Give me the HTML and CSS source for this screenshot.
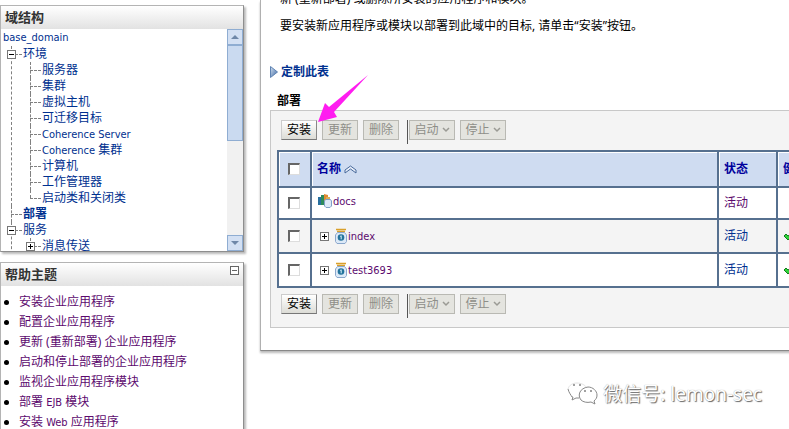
FILE: index.html
```html
<!DOCTYPE html>
<html lang="zh-CN">
<head>
<meta charset="utf-8">
<title>部署</title>
<link rel="stylesheet" href="styles.css">
</head>
<body>
<svg class="defs" aria-hidden="true">
  <defs>
    <linearGradient id="tri" x1="0" y1="0" x2="1" y2="1"><stop offset="0" stop-color="#d3e2f2"/><stop offset="1" stop-color="#3c66a0"/></linearGradient>
    <symbol id="jar" viewBox="0 0 12 16">
      <path d="M1 1.500h10M2 3.500h8" stroke="#d9a02b" stroke-width="1.4"/>
      <path d="M2.500 4.500h7l2 2.500v6.500l-1.500 2h-8l-1.500-2v-6.500z" fill="#dce9f7" stroke="#8aa7cc"/>
      <circle cx="6" cy="9.500" r="3.300" fill="#23739c"/>
      <path d="M5.200 8.500l1-.8v3.600" fill="none" stroke="#d8f2fa"/>
    </symbol>
    <symbol id="books" viewBox="0 0 14 14">
      <path d="M0 3h4v8H0z" fill="#286f9f"/><path d="M3 1h3v10H3z" fill="#2c8b5b"/>
      <path d="M6 0l4 1v9H6z" fill="#e08a32"/><path d="M8 3h4v2H8z" fill="#dcae54"/>
      <path d="M7.500 5.500h5l1 1.500v5l-1.500 1.500h-4l-1.500-1.500v-5z" fill="#dce9f7" stroke="#7fa0c8"/>
    </symbol>
    <symbol id="check" viewBox="0 0 12 9">
      <path d="M1 4l2-2 2 2 4-3 2 1-6 6z" fill="#2fd43a" stroke="#137c1c"/>
    </symbol>
    <symbol id="chev" viewBox="0 0 8 6"><path d="M1 1l3 3 3-3" fill="none" stroke="#9a9a94" stroke-width="1.500"/></symbol>
  </defs>
</svg>
<div class="page">
  <aside class="side">
    <section class="panel">
      <h2 class="panel-head">域结构</h2>
      <div class="tree-wrap">
        <nav class="tree">
          <a class="root" href="#">base_domain</a>
          <ul class="lvl1">
            <li><span class="box minus"></span><a href="#">环境</a>
              <ul class="lvl2">
                <li><a href="#">服务器</a></li>
                <li><a href="#">集群</a></li>
                <li><a href="#">虚拟主机</a></li>
                <li><a href="#">可迁移目标</a></li>
                <li><a href="#"><span class="latin">Coherence Server</span></a></li>
                <li><a href="#"><span class="latin">Coherence</span> 集群</a></li>
                <li><a href="#">计算机</a></li>
                <li><a href="#">工作管理器</a></li>
                <li><a href="#">启动类和关闭类</a></li>
              </ul>
            </li>
            <li><a class="current" href="#">部署</a></li>
            <li class="more"><span class="box minus"></span><a href="#">服务</a>
              <ul class="lvl2">
                <li class="more"><span class="box plus"></span><a href="#">消息传送</a></li>
              </ul>
            </li>
          </ul>
        </nav>
        <div class="scroll">
          <button class="arrow up" aria-label="向上"></button>
          <div class="thumb"></div>
          <button class="arrow down" aria-label="向下"></button>
        </div>
      </div>
    </section>
    <section class="panel">
      <h2 class="panel-head">帮助主题 <button class="collapse" aria-label="折叠"></button></h2>
      <ul class="help">
        <li><a href="#">安装企业应用程序</a></li>
        <li><a href="#">配置企业应用程序</a></li>
        <li><a href="#">更新 (重新部署) 企业应用程序</a></li>
        <li><a href="#">启动和停止部署的企业应用程序</a></li>
        <li><a href="#">监视企业应用程序模块</a></li>
        <li><a href="#">部署 <span class="latin">EJB</span> 模块</a></li>
        <li><a href="#">安装 <span class="latin">Web</span> 应用程序</a></li>
      </ul>
    </section>
  </aside>
  <main class="main">
    <div class="intro">
      <p>新 (重新部署) 或删除所安装的应用程序和模块。</p>
      <p>要安装新应用程序或模块以部署到此域中的目标, 请单击“安装”按钮。</p>
    </div>
    <a class="customize" href="#"><svg width="8" height="12" viewBox="0 0 8 12"><path d="M.5.500L7.500 6 .5 11.500z" fill="url(#tri)" stroke="#5f83b3"/></svg>定制此表</a>
    <h1 class="title">部署</h1>
    <div class="grid-box">
      <div class="bar">
        <button class="btn">安装</button><button class="btn" disabled>更新</button><button class="btn" disabled>删除</button>
        <div class="group"><button class="btn" disabled>启动<svg width="8" height="6"><use href="#chev"/></svg></button><button class="btn" disabled>停止<svg width="8" height="6"><use href="#chev"/></svg></button></div>
        <svg class="pointer" width="52" height="48" viewBox="0 0 52 48" aria-hidden="true"><path d="M51 0L12 32 8 28 1 47 20 42 17 37z" fill="#ff1cf0"/></svg>
      </div>
      <table class="table">
        <colgroup><col class="c-sel"><col><col class="c-state"><col class="c-health"></colgroup>
        <thead>
          <tr><th><input type="checkbox" aria-label="全选"></th><th><span class="cell">名称<svg class="sort" width="13" height="9" viewBox="0 0 13 9"><path d="M1 5L6.500 1 12 5v3L6.500 4 1 8z" fill="#e8eefa" stroke="#47699a"/></svg></span></th><th>状态</th><th>健</th></tr>
        </thead>
        <tbody>
          <tr class="short"><td><input type="checkbox" aria-label="docs"></td><td><span class="cell docs"><svg width="14" height="14"><use href="#books"/></svg><a class="latin" href="#">docs</a></span></td><td><a href="#">活动</a></td><td></td></tr>
          <tr class="alt"><td><input type="checkbox" aria-label="index"></td><td><span class="cell"><span class="box plus"></span><svg class="jar" width="12" height="16"><use href="#jar"/></svg><a class="latin" href="#">index</a></span></td><td><a class="new" href="#">活动</a></td><td><svg width="12" height="9"><use href="#check"/></svg></td></tr>
          <tr><td><input type="checkbox" aria-label="test3693"></td><td><span class="cell"><span class="box plus"></span><svg class="jar" width="12" height="16"><use href="#jar"/></svg><a class="latin" href="#">test3693</a></span></td><td><a class="new" href="#">活动</a></td><td><svg width="12" height="9"><use href="#check"/></svg></td></tr>
        </tbody>
      </table>
      <div class="bar">
        <button class="btn">安装</button><button class="btn" disabled>更新</button><button class="btn" disabled>删除</button>
        <div class="group"><button class="btn" disabled>启动<svg width="8" height="6"><use href="#chev"/></svg></button><button class="btn" disabled>停止<svg width="8" height="6"><use href="#chev"/></svg></button></div>
      </div>
    </div>
  </main>
</div>
<div class="mark">
  <svg width="32" height="24" viewBox="0 0 32 24" fill="none" stroke="#888" stroke-width="1"><path d="M1 7c1 4 3 6 4 8l1 0-1 3 4-2h3" /><path d="M1 7C2 3 6 1 10 1s8 2 9 4" stroke="#e2e2e2"/><path d="M14 18c-4-5-1-12 7-13 5 0 9 4 9 8 0 3-1 4-3 6l1 3-4-2c-4 1-8 0-10-2z"/><path d="M6 3h2M12 3h2M17 9h2M23 9h2" stroke="#444"/></svg>
  <span>微信号: lemon-sec</span>
</div>
</body>
</html>
```
FILE: styles.css
```css
* { box-sizing: border-box; }
body {
  margin: 0;
  background: #fff;
  color: #000;
  font: 12px/16px "Noto Sans", "Noto Sans CJK SC", sans-serif;
  overflow: hidden;
  height: 100vh;
}
.defs { position: absolute; width: 0; height: 0; }
a { color: #5c0a6e; text-decoration: none; }
svg { flex: none; display: block; }
ul { list-style: none; margin: 0; padding: 0; }
button { font: inherit; padding: 0; margin: 0; }
.latin, .tree .root { font-family: "DejaVu Sans Condensed", "Noto Sans", sans-serif; font-size: 11px; line-height: 1; }
.tree .root { line-height: 17px; }

.page { display: flex; gap: 16px; }
.side { flex: none; width: 244px; padding-top: 5px; display: flex; flex-direction: column; gap: 10px; }
.panel { border: 1px solid #b4b4b4; border-bottom-color: #8e8e8e; border-right-color: #8e8e8e; box-shadow: 2px 2px 2px #bbb; background: #fff; }
.panel-head {
  display: flex; justify-content: space-between;
  margin: 0; padding: 0 4px; height: 23px;
  font-size: 13px; line-height: 22px; color: #333;
  background: linear-gradient(#fff, #e2e2e2);
}
.collapse { width: 9px; height: 9px; margin-top: 3px; border: 1px solid #666; background: linear-gradient(#666, #666) center / 5px 1px no-repeat #fff; }

.tree-wrap { display: flex; justify-content: space-between; height: 222px; overflow: hidden; }
.tree { padding: 0 0 0 2px; white-space: nowrap; }
.tree a { color: #00308f; }
.tree .root { display: block; }
.tree .current { font-weight: 700; }
.lvl1 { padding-left: 8px; }
.lvl2 { padding-left: 7px; }
.tree li { position: relative; padding-left: 12px; }
.tree li::before { content: ""; position: absolute; left: 0; top: 0; bottom: 0; border-left: 1px dashed #808080; }
.lvl2 > li:last-child:not(.more)::before { bottom: auto; height: 8px; }
.tree li::after { content: ""; position: absolute; left: 0; top: 8px; width: 11px; border-top: 1px dashed #808080; }
.box { flex: none; display: block; width: 9px; height: 9px; border: 1px solid #777; background: #fff; }
.minus { background: linear-gradient(#000, #000) center / 5px 1px no-repeat #fff; }
.plus { background: linear-gradient(#000, #000) center / 5px 1px no-repeat, linear-gradient(#000, #000) center / 1px 5px no-repeat #fff; }
.tree .box { position: absolute; left: -4px; top: 4px; z-index: 1; }
.scroll { flex: none; width: 16px; background: #f1f1f1; display: flex; flex-direction: column; }
.arrow { width: 16px; height: 16px; border: 1px solid #8fadd2; background: #d3e0f3; display: grid; place-items: center; }
.arrow::before { content: ""; border: 4px solid transparent; border-top-width: 0; border-bottom-color: #6f87a8; }
.down::before { transform: rotate(180deg); }
.down { margin-top: auto; }
.thumb { height: 96px; border: 1px solid #8fadd2; background: #cadaf0; }

.help { padding: 6px 0 20px; line-height: 20px; }
.help li { display: flex; align-items: center; gap: 10px; padding-left: 3px; white-space: nowrap; }
.help li::before { content: ""; width: 5px; height: 5px; border-radius: 50%; background: #000; }

.main {
  flex: 1; min-width: 0; height: max-content; margin-right: -60px;
  border-left: 1px solid #b0b0b0; border-bottom: 1px solid #888;
  box-shadow: 0 2px 2px #bbb; padding: 0 9px 22px;
}
.intro { padding-left: 10px; margin-top: -11px; line-height: 20px; white-space: nowrap; }
.intro p { margin: 0 0 7px; }
.customize { display: flex; align-items: center; gap: 3px; margin-top: 20px; height: 32px; font-weight: 700; color: #00308f; }
.title { margin: 0; padding: 5px 0 0 7px; height: 22px; font-size: 12px; line-height: 16px; }
.grid-box { border: 1px solid #c8c8c8; background: #f4f4f4; padding: 0 6px; }
.bar { position: relative; display: flex; gap: 5px; padding: 9px 4px 0; height: 39px; }
.table + .bar { padding-top: 6px; }
.pointer { position: absolute; left: 40px; top: -36px; }
.btn {
  display: flex; align-items: center; justify-content: center; gap: 3px;
  min-width: 36px; height: 20px; padding: 0 4px; line-height: 16px;
  border: 1px solid #ccc; border-right-color: #888; border-bottom-color: #777;
  background: linear-gradient(#fff, #dcdcd6); color: #000; white-space: nowrap;
}
.btn:disabled { background: #e4e4df; border-color: #b9b9b3; color: #8e8e88; }
.group { display: flex; gap: 5px; height: 24px; margin-left: 3px; padding-left: 1px; border-left: 1px solid #555; }
.group .btn { min-width: 46px; }

.table { width: 100%; table-layout: fixed; border-collapse: collapse; background: #fff; }
.table th, .table td { border: 2px solid #56708f; padding: 0 5px; text-align: left; height: 34px; overflow: hidden; }
.table th { height: 36px; background: #cfdcf1; color: #00009c; box-shadow: inset 1px 1px #fff; }
.table .short td { height: 32px; }
.c-sel { width: 33px; }
.c-state { width: 59px; }
.c-health { width: 55px; }
.table tr > :first-child { padding: 0 9px; }
.alt { background: #f4f4f4; }
.table .new { color: #00308f; }
.cell { display: flex; align-items: center; }
.cell .box { margin: 0 6px 0 3px; }
.cell.docs { gap: 1px; padding: 0 1px 4px; }
.jar { margin-right: 1px; }
.sort { margin-left: 3px; }
input[type="checkbox"] {
  appearance: none; display: block; width: 12px; height: 12px; margin: 0;
  background: #fff; border: 1px solid #ddd; border-top: 2px solid #666; border-left: 2px solid #666;
}

.mark {
  position: absolute; right: 27px; bottom: 22px;
  display: flex; align-items: center; gap: 4px;
  font-size: 19px; line-height: 26px; color: #fff; white-space: nowrap;
  text-shadow: 1px 1px 1px #666, 0 0 1px #999;
}
```
